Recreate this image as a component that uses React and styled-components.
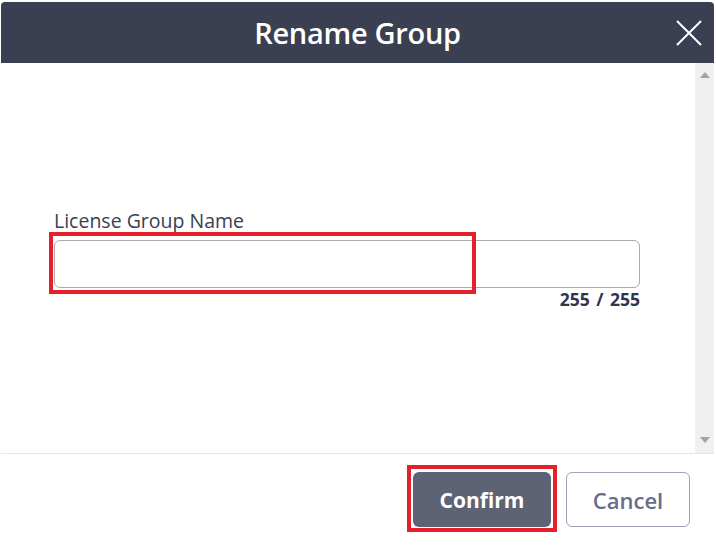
import React from "react";
import styled, { createGlobalStyle } from "styled-components";

const GlobalStyle = createGlobalStyle`
  html, body {
    margin: 0;
    padding: 0;
    background: #ffffff;
  }
  body {
    font-family: "Open Sans", "Noto Sans", "Liberation Sans", sans-serif;
  }
`;

const Page = styled.div`
  width: 716px;
  height: 546px;
  background: #ffffff;
  padding: 2px 2px 0 1px;
  box-sizing: border-box;
  overflow: hidden;
`;

const Dialog = styled.div`
  display: flex;
  flex-direction: column;
  height: 100%;
`;

const Header = styled.div`
  position: relative;
  height: 61px;
  background: #3a4052;
  border-radius: 4px 4px 0 0;
  display: flex;
  align-items: center;
  justify-content: center;
  flex-shrink: 0;
`;

const Title = styled.h1`
  margin: 0;
  color: #ffffff;
  font-size: 29px;
  font-weight: 600;
  letter-spacing: -0.3px;
`;

const CloseButton = styled.button`
  position: absolute;
  right: 11px;
  top: 17px;
  width: 28px;
  height: 28px;
  padding: 0;
  border: none;
  background: transparent;
  display: flex;
  align-items: center;
  justify-content: center;
  cursor: pointer;
`;

const Body = styled.div`
  display: flex;
  height: 390px;
  flex-shrink: 0;
`;

const Content = styled.div`
  flex: 1;
  display: flex;
  flex-direction: column;
  padding: 145px 55px 0 53px;
`;

const Field = styled.div`
  position: relative;
  display: flex;
  flex-direction: column;
`;

const Label = styled.label`
  color: #3a4052;
  font-size: 19.5px;
  line-height: 26px;
  margin-bottom: 6px;
`;

const Input = styled.input`
  height: 48px;
  box-sizing: border-box;
  border: 1px solid #a9abb2;
  border-radius: 6px;
  padding: 0 12px;
  font-size: 17px;
  font-family: inherit;
  outline: none;
`;

const Counter = styled.div`
  align-self: flex-end;
  color: #2d3550;
  font-size: 17.5px;
  font-weight: 700;
  line-height: 22px;
  word-spacing: 2px;
`;

const Highlight = styled.div`
  position: absolute;
  border: 4px solid #e6202b;
  pointer-events: none;
  box-sizing: border-box;
`;

const ScrollTrack = styled.div`
  width: 19px;
  background: #f0f0f0;
  display: flex;
  flex-direction: column;
  justify-content: space-between;
  align-items: center;
  padding: 9px 0 10px;
  box-sizing: border-box;
`;

const Divider = styled.div`
  height: 1px;
  background: #e3e6ec;
  flex-shrink: 0;
`;

const Footer = styled.div`
  display: flex;
  justify-content: flex-end;
  align-items: flex-start;
  gap: 15px;
  padding: 18px 24px 0 0;
`;

const ButtonWrap = styled.div`
  position: relative;
`;

const Button = styled.button`
  height: 55px;
  box-sizing: border-box;
  border-radius: 6px;
  font-family: inherit;
  font-size: ${(p) => (p.$primary ? 21 : 22)}px;
  font-weight: ${(p) => (p.$primary ? 700 : 600)};
  padding: 0;
  width: ${(p) => p.$width}px;
  cursor: pointer;
  background: ${(p) => (p.$primary ? "#5d6375" : "#ffffff")};
  color: ${(p) => (p.$primary ? "#ffffff" : "#676d8a")};
  border: ${(p) => (p.$primary ? "none" : "1.5px solid #9ea3b8")};
`;

const Arrow = ({ up }) => (
  <svg width="10" height="6" viewBox="0 0 10 6">
    <polygon points={up ? "0,6 10,6 5,0" : "0,0 10,0 5,6"} fill="#a3a3a3" />
  </svg>
);

export default function App() {
  return (
    <>
      <GlobalStyle />
      <Page>
        <Dialog>
          <Header>
            <Title>Rename Group</Title>
            <CloseButton aria-label="Close">
              <svg width="26" height="26" viewBox="0 0 26 26">
                <path d="M1 1 L25 25 M25 1 L1 25" stroke="#ffffff" strokeWidth="2" />
              </svg>
            </CloseButton>
          </Header>
          <Body>
            <Content>
              <Field>
                <Label>License Group Name</Label>
                <Input />
                <Counter>255 / 255</Counter>
                <Highlight style={{ left: -5, top: 24, width: 427, height: 62 }} />
              </Field>
            </Content>
            <ScrollTrack>
              <Arrow up />
              <Arrow />
            </ScrollTrack>
          </Body>
          <Divider />
          <Footer>
            <ButtonWrap>
              <Button $primary $width={138}>Confirm</Button>
              <Highlight style={{ left: -6, top: -7, width: 150, height: 67 }} />
            </ButtonWrap>
            <Button $width={124}>Cancel</Button>
          </Footer>
        </Dialog>
      </Page>
    </>
  );
}
